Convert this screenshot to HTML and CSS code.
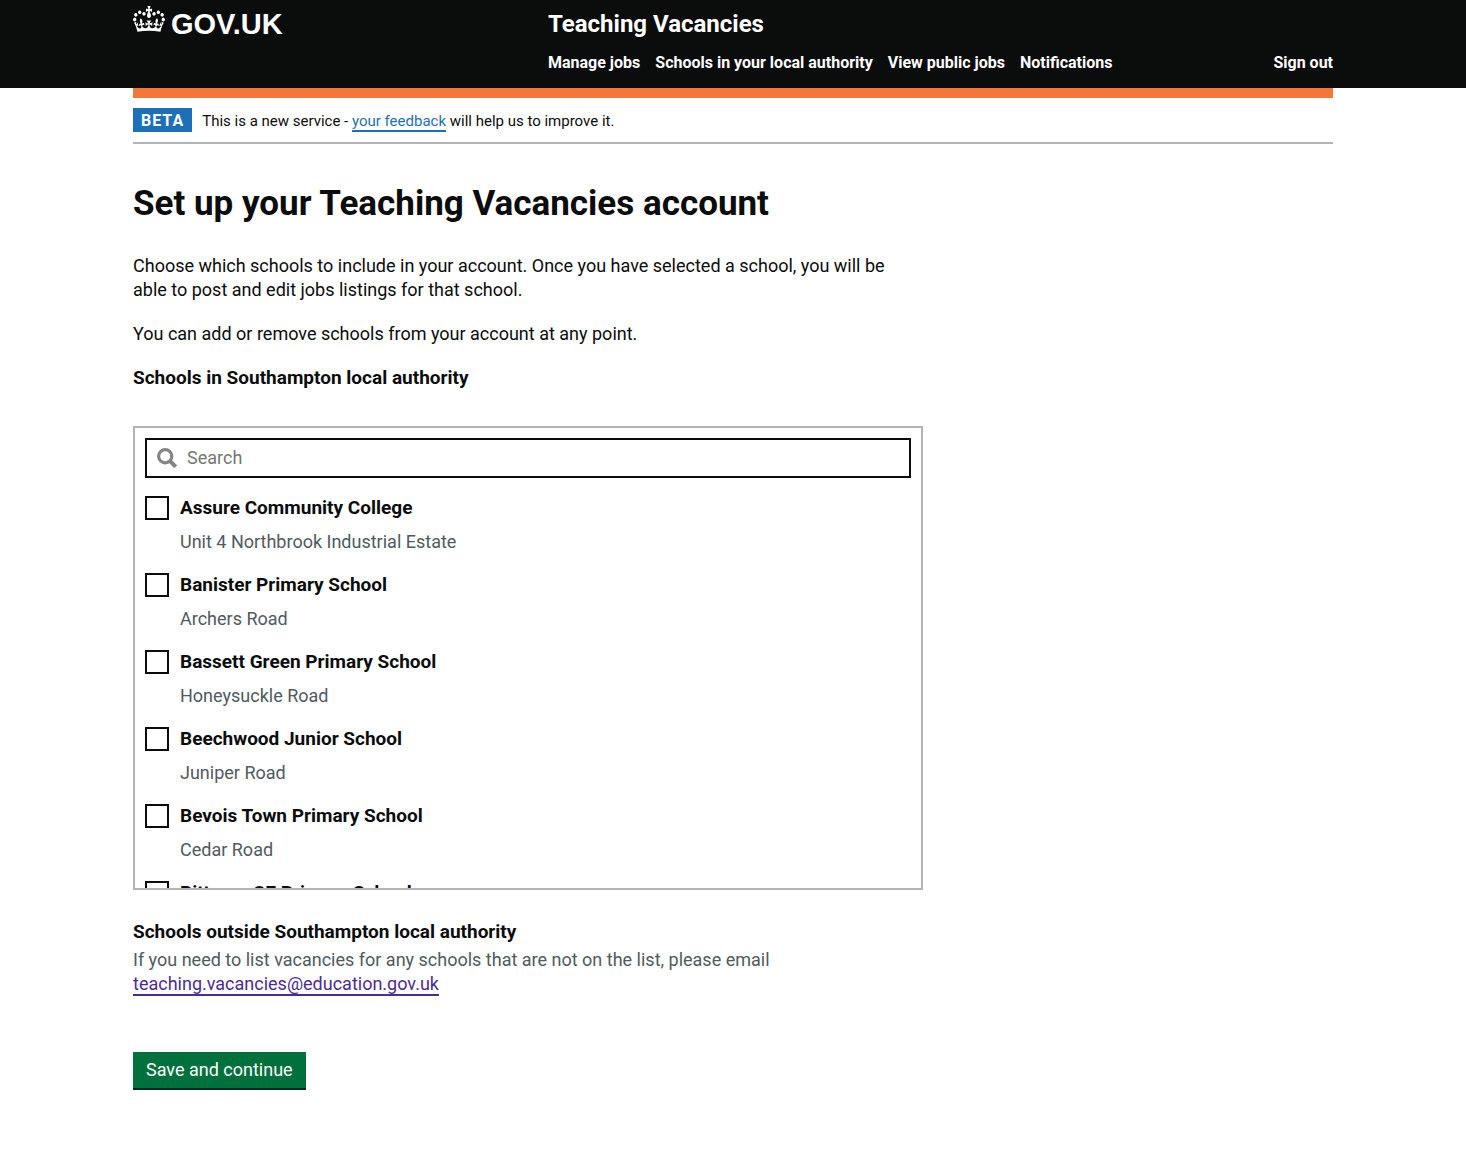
FILE: index.html
```html
<!DOCTYPE html>
<html lang="en">
<head>
<meta charset="utf-8">
<meta name="viewport" content="width=device-width, initial-scale=1">
<title>Set up your Teaching Vacancies account</title>
<link rel="stylesheet" href="styles.css">
</head>
<body>
<header class="header">
  <div class="container header-inner">
    <a class="logo" href="#">
      <svg class="crown" viewBox="0 0 132 97" preserveAspectRatio="none" aria-hidden="true"><path fill="currentColor" fill-rule="evenodd" d="M25 30.2c3.5 1.5 7.7-.2 9.1-3.7 1.5-3.6-.2-7.8-3.9-9.2-3.6-1.4-7.6.3-9.1 3.9-1.4 3.5.3 7.5 3.9 9zM9 39.5c3.6 1.5 7.8-.2 9.2-3.7 1.5-3.6-.2-7.8-3.9-9.1-3.6-1.5-7.6.2-9.1 3.8-1.4 3.5.3 7.5 3.8 9zM4.4 57.2c3.5 1.5 7.7-.2 9.1-3.8 1.5-3.6-.2-7.7-3.9-9.1-3.5-1.5-7.6.3-9.1 3.8-1.4 3.5.3 7.6 3.9 9.1zm38.3-21.4c3.5 1.5 7.7-.2 9.1-3.8 1.5-3.6-.2-7.7-3.9-9.1-3.6-1.5-7.6.3-9.1 3.8-1.3 3.6.4 7.7 3.9 9.1zm64.4-5.6c-3.6 1.5-7.8-.2-9.1-3.7-1.5-3.6.2-7.8 3.8-9.2 3.6-1.4 7.7.3 9.2 3.9 1.3 3.5-.4 7.5-3.9 9zm15.9 9.3c-3.6 1.5-7.7-.2-9.1-3.7-1.5-3.6.2-7.8 3.7-9.1 3.6-1.5 7.7.2 9.2 3.8 1.5 3.5-.3 7.5-3.8 9zm4.7 17.7c-3.6 1.5-7.8-.2-9.2-3.8-1.5-3.6.2-7.7 3.9-9.1 3.6-1.5 7.7.3 9.2 3.8 1.3 3.5-.4 7.6-3.9 9.1zM89.3 35.8c-3.6 1.5-7.8-.2-9.2-3.8-1.4-3.6.2-7.7 3.9-9.1 3.6-1.5 7.7.3 9.2 3.8 1.4 3.6-.3 7.7-3.9 9.1zM69.7 17.7l8.9 4.7V9.3l-8.9 2.8c-.2-.3-.5-.6-.9-.9L72.4 0H59.6l3.5 11.2c-.3.3-.6.5-.9.9l-8.8-2.8v13.1l8.8-4.7c.3.3.6.7.9.9l-5 15.4v.1c-.2.8-.4 1.6-.4 2.4 0 4.1 3.1 7.5 7 8.1h.2c.3 0 .7.1 1 .1.4 0 .7 0 1-.1h.2c4-.6 7.1-4.1 7.1-8.1 0-.8-.1-1.7-.4-2.4V34l-5.1-15.4c.4-.2.7-.6 1-.9zM66 92.8c16.9 0 32.8 1.1 47.1 3.2 4-16.9 8.9-26.7 14-33.5l-9.6-3.4c1 4.9 1.1 7.2 0 10.2-1.5-1.4-3-4.3-4.2-8.7L108.6 76c2.8-2 5-3.2 7.5-3.3-4.4 9.4-10 11.9-13.6 11.2-4.3-.8-6.3-4.6-5.6-7.9 1-4.7 5.7-5.9 8-.5 4.3-8.7-3-11.4-7.6-8.8 7.1-7.2 7.9-13.5 2.1-21.1-8 6.1-8.1 12.3-4.5 20.8-4.7-5.4-12.1-2.5-9.5 6.2 3.4-5.2 7.9-2 7.2 3.1-.6 4.3-6.4 7.8-13.5 7.2-10.3-.9-10.9-8-11.2-13.8 2.5-.5 7.1 1.8 11 7.3L80.2 60c-4.1 4.4-8 5.3-12.3 5.4 1.4-4.4 8-11.6 8-11.6H55.5s6.4 7.2 7.9 11.6c-4.2-.1-8-1-12.3-5.4l1.4 16.4c3.9-5.5 8.5-7.7 10.9-7.3-.3 5.8-.9 12.8-11.1 13.8-7.2.6-12.9-2.9-13.5-7.2-.7-5 3.8-8.3 7.1-3.1 2.7-8.7-4.6-11.6-9.4-6.2 3.7-8.5 3.6-14.7-4.6-20.8-5.8 7.6-5 13.9 2.2 21.1-4.7-2.6-11.9.1-7.7 8.8 2.3-5.5 7.1-4.2 8.1.5.7 3.3-1.3 7.1-5.7 7.9-3.5.7-9-1.8-13.5-11.2 2.5.1 4.7 1.3 7.5 3.3l-4.7-15.4c-1.2 4.4-2.7 7.2-4.3 8.7-1.1-3-.9-5.3 0-10.2l-9.5 3.4c5 6.9 9.9 16.7 14 33.5 14.8-2.1 30.8-3.2 47.7-3.2z"/></svg>
      <span>GOV.UK</span>
    </a>
    <div class="header-content">
      <a class="service-name" href="#">Teaching Vacancies</a>
      <nav class="nav" aria-label="Main">
        <a href="#">Manage jobs</a>
        <a href="#">Schools in your local authority</a>
        <a href="#">View public jobs</a>
        <a href="#">Notifications</a>
        <a class="sign-out" href="#">Sign out</a>
      </nav>
    </div>
  </div>
</header>
<div class="container">
  <div class="phase-banner">
    <strong class="tag">BETA</strong>
    <span class="phase-text">This is a new service - <a class="link" href="#">your feedback</a> will help us to improve it.</span>
  </div>
  <main class="main">
    <h1 class="title">Set up your Teaching Vacancies account</h1>
    <p class="body">Choose which schools to include in your account. Once you have selected a school, you will be able to post and edit jobs listings for that school.</p>
    <p class="body">You can add or remove schools from your account at any point.</p>
    <form>
      <h2 class="subtitle" id="schools">Schools in Southampton local authority</h2>
      <div class="panel" role="group" aria-labelledby="schools">
        <div class="search">
          <svg class="search-icon" viewBox="0 0 20 20" aria-hidden="true"><circle cx="8.2" cy="8.2" r="6.6" fill="none" stroke="currentColor" stroke-width="3.2"/><path d="M13 13l5.8 5.8" stroke="currentColor" stroke-width="4"/></svg>
          <input class="search-input" type="text" placeholder="Search" aria-label="Search">
        </div>
        <div class="options">
          <div class="option"><input class="box" type="checkbox" id="s1"><label for="s1">Assure Community College</label><span class="hint">Unit 4 Northbrook Industrial Estate</span></div>
          <div class="option"><input class="box" type="checkbox" id="s2"><label for="s2">Banister Primary School</label><span class="hint">Archers Road</span></div>
          <div class="option"><input class="box" type="checkbox" id="s3"><label for="s3">Bassett Green Primary School</label><span class="hint">Honeysuckle Road</span></div>
          <div class="option"><input class="box" type="checkbox" id="s4"><label for="s4">Beechwood Junior School</label><span class="hint">Juniper Road</span></div>
          <div class="option"><input class="box" type="checkbox" id="s5"><label for="s5">Bevois Town Primary School</label><span class="hint">Cedar Road</span></div>
          <div class="option"><input class="box" type="checkbox" id="s6"><label for="s6">Bitterne CE Primary School</label></div>
        </div>
      </div>
      <h2 class="subtitle">Schools outside Southampton local authority</h2>
      <p class="outside">If you need to list vacancies for any schools that are not on the list, please email <a class="link visited" href="#">teaching.vacancies@education.gov.uk</a></p>
      <button class="button" type="button">Save and continue</button>
    </form>
  </main>
</div>
</body>
</html>
```
FILE: styles.css
```css
* { box-sizing: border-box; }
body {
  margin: 0;
  background: #fff;
  color: #0b0c0c;
  font: 18px/24px Roboto, Arial, sans-serif;
}
.container { max-width: 1200px; margin: 0 auto; }
.header { background: #0b0c0c; color: #fff; }
.header a { color: inherit; text-decoration: none; }
.header-inner { display: flex; padding: 6px 0 13px; }
.logo {
  display: flex;
  flex: 0 0 415px;
  align-items: flex-start;
  gap: 6px;
  font: bold 29px/36px "Liberation Sans", Arial, sans-serif;
}
.crown { width: 32px; height: 26px; }
.header-content { flex: 1; }
.service-name { display: block; font-size: 24px; line-height: 36px; font-weight: bold; }
.nav { display: flex; gap: 15px; margin-top: 9px; font-size: 16px; font-weight: bold; }
.sign-out { margin-left: auto; }
.phase-banner {
  display: flex;
  gap: 10px;
  align-items: center;
  border-top: 10px solid #f47738;
  border-bottom: 2px solid #b1b4b6;
  padding: 10px 0;
  font-size: 15px;
  line-height: 22px;
}
.phase-text { padding-top: 2px; }
.tag {
  background: #1d70b8;
  color: #fff;
  padding: 2px 8px 0;
  font-size: 16px;
  letter-spacing: 1px;
}
.link {
  color: #1d70b8;
  text-decoration: underline;
  text-decoration-thickness: 2px;
  text-underline-offset: 4px;
  text-decoration-skip-ink: none;
}
.visited { color: #4c2c92; }
.main { max-width: 790px; padding: 40px 0; }
.title { margin: 0 0 30px; font-size: 35px; line-height: 40px; }
.body { margin: 0 0 20px; padding-right: 10px; }
.subtitle { margin: 0; font-size: 19px; line-height: 24px; }
.panel {
  height: 464px;
  margin: 36px 0 30px;
  border: 2px solid #b1b4b6;
  padding: 10px;
  overflow: auto;
  scrollbar-width: none;
}
.search {
  display: flex;
  align-items: center;
  gap: 10px;
  height: 40px;
  border: 2px solid #0b0c0c;
  padding: 0 10px;
}
.search-icon { width: 20px; height: 20px; color: #858585; }
.search-input { flex: 1; border: 0; padding: 0; font: inherit; outline: 0; }
.search-input::placeholder { color: #757575; opacity: 1; }
.options { padding-top: 18px; }
.option {
  display: grid;
  grid-template-columns: 24px 1fr;
  column-gap: 11px;
  row-gap: 10px;
  margin-bottom: 19px;
}
.box {
  appearance: none;
  width: 24px;
  height: 24px;
  margin: 0;
  border: 2px solid #0b0c0c;
  background: #fff;
}
.box:checked { background: #0b0c0c; }
.option label { font-size: 19px; font-weight: bold; }
.hint { grid-column: 2; color: #505a5f; }
.outside { margin: 4px 0 56px; color: #505a5f; }
.button {
  border: 0;
  padding: 6px 13px;
  background: #00703c;
  color: #fff;
  font: inherit;
  box-shadow: 0 2px 0 #002d18;
}
```
